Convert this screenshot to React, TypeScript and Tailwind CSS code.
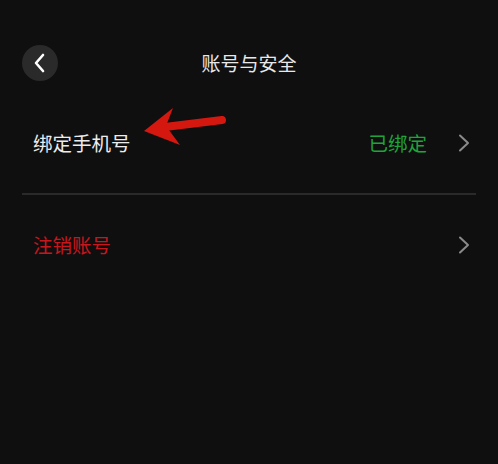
import React from "react";

const Chevron = () => (
    <svg width="14" height="20" viewBox="0 0 14 20" fill="none" className="shrink-0">
        <path d="M3 2.5 L11 10 L3 17.5" stroke="#8a8a8a" strokeWidth="2" strokeLinecap="round" strokeLinejoin="round" />
    </svg>
);

export default function App() {
    return (
        <div
            className="relative w-[498px] h-[464px] bg-[#0f0f10] overflow-hidden"
            style={{ fontFamily: '"Noto Sans CJK SC", "Noto Sans", sans-serif' }}
        >
            {/* header */}
            <div className="relative flex items-center h-[36px] mt-[45px] px-[22px]">
                <button className="w-[36px] h-[36px] rounded-full bg-[#2a2a2b] flex items-center justify-center">
                    <svg width="14" height="20" viewBox="0 0 14 20" fill="none">
                        <path d="M10 2 L3 10 L10 18" stroke="#ffffff" strokeWidth="2.6" strokeLinecap="round" strokeLinejoin="round" />
                    </svg>
                </button>
                <h1 className="absolute left-0 right-0 text-center text-[19px] text-[#e8e8e8] pointer-events-none">
                    账号与安全
                </h1>
            </div>

            {/* bind phone row */}
            <div className="flex items-center justify-between h-[62px] mt-[31px] pl-[33px] pr-[27px]">
                <span className="text-[19.5px] text-[#ececec]">绑定手机号</span>
                <div className="flex items-center gap-[30px]">
                    <span className="text-[19.5px] text-[#1fa33a]">已绑定</span>
                    <Chevron />
                </div>
            </div>

            <div className="mx-[22px] mt-[19px] h-[2px] bg-[#2a2a2b]" />

            {/* cancel account row */}
            <div className="flex items-center justify-between h-[62px] mt-[19px] pl-[33px] pr-[27px]">
                <span className="text-[19.5px] text-[#c8161d]">注销账号</span>
                <Chevron />
            </div>

            {/* annotation arrow */}
            <svg className="absolute left-[140px] top-[100px]" width="90" height="50" viewBox="0 0 90 50">
                <path d="M25 27 L82 20" stroke="#d4180f" strokeWidth="8" strokeLinecap="round" />
                <path d="M4 31 L33 8 L26 26 L40 45 Z" fill="#d4180f" />
            </svg>
        </div>
    );
}
